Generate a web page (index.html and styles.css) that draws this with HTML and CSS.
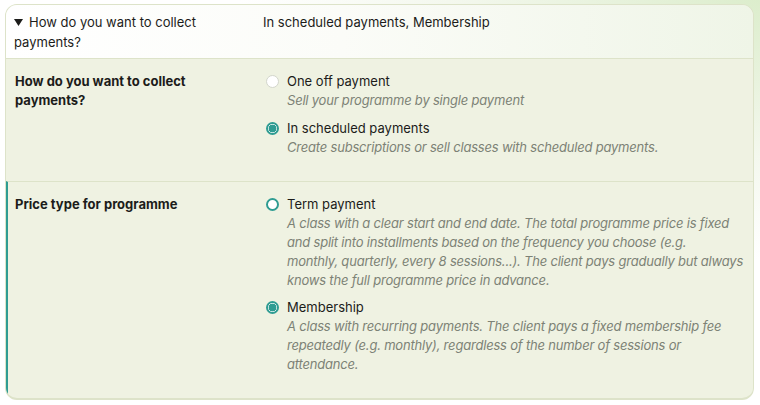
FILE: index.html
```html
<!DOCTYPE html>
<html lang="en">
<head>
  <meta charset="UTF-8">
  <title>Programme pricing</title>
  <link rel="stylesheet" href="styles.css">
</head>
<body>
  <div class="card">
    <div class="summary">
      <div class="summary-label"><svg class="caret" width="9" height="7" viewBox="0 0 9 7"><path d="M0 0H9L4.5 7Z" fill="#1c1c1a"/></svg>How do you want to collect payments?</div>
      <div class="summary-value">In scheduled payments, Membership</div>
    </div>

    <div class="section">
      <div class="label">How do you want to collect payments?</div>
      <div class="options">
        <div class="option">
          <span class="radio"></span>
          <div>
            <div class="option-title">One off payment</div>
            <div class="option-desc">Sell your programme by single payment</div>
          </div>
        </div>
        <div class="option">
          <span class="radio checked"></span>
          <div>
            <div class="option-title">In scheduled payments</div>
            <div class="option-desc">Create subscriptions or sell classes with scheduled payments.</div>
          </div>
        </div>
      </div>
    </div>

    <div class="section active">
      <div class="label">Price type for programme</div>
      <div class="options">
        <div class="option">
          <span class="radio focus"></span>
          <div>
            <div class="option-title">Term payment</div>
            <div class="option-desc">A class with a clear start and end date. The total programme price is fixed and split into installments based on the frequency you choose (e.g.<br>monthly, quarterly, every 8 sessions...). The client pays gradually but always knows the full programme price in advance.</div>
          </div>
        </div>
        <div class="option">
          <span class="radio checked"></span>
          <div>
            <div class="option-title">Membership</div>
            <div class="option-desc">A class with recurring payments. The client pays a fixed membership fee repeatedly (e.g. monthly), regardless of the number of sessions or attendance.</div>
          </div>
        </div>
      </div>
    </div>
  </div>
</body>
</html>
```

FILE: styles.css
```css
body {
  margin: 0;
  padding: 4px 6px 0 5px;
  font-family: "Inter", "Noto Sans", sans-serif;
  font-size: 13px;
  color: #1c1c1a;
  background: radial-gradient(ellipse 520px 260px at 100% 0%, #dcedcc 0%, #f4f8ee 60%, #ffffff 100%);
  height: 405px;
  box-sizing: border-box;
}

.card {
  border: 1px solid #dde3c9;
  border-bottom-width: 2px;
  border-radius: 12px;
  overflow: hidden;
  background: #eff2e2;
}

.summary {
  display: grid;
  grid-template-columns: 248px 1fr;
  padding: 7px 14px 6px 8px;
  line-height: 20px;
  background: linear-gradient(90deg, #ffffff 0%, #fbfcf8 45%, #eff5e7 100%);
  border-bottom: 1px solid #dde3c9;
}

.summary-label {
  padding-right: 40px;
}

.caret {
  margin: 0 6px 1px 0;
}

.summary-value {
  padding-left: 1px;
}

.section {
  display: grid;
  grid-template-columns: 248px 1fr;
  padding: 13px 8px 24px 9px;
  line-height: 19px;
  border-top: 1px solid #dde3c9;
}

.summary + .section {
  border-top: none;
}

.section.active {
  border-left: 2px solid #2f9c92;
  padding-left: 7px;
}

.label {
  font-weight: 700;
  padding-right: 60px;
}

.options {
  display: flex;
  flex-direction: column;
  gap: 8.5px;
}

.option {
  display: flex;
  gap: 8px;
}

.radio {
  flex: none;
  width: 13px;
  height: 13px;
  margin: 3px 0 0 3px;
  border-radius: 50%;
  background: #fff;
  border: 1px solid #d3d6cc;
  box-sizing: border-box;
}

.radio.focus {
  border: 2px solid #2f9c92;
}

.radio.checked {
  border: 2px solid #2f9c92;
  background: radial-gradient(circle, #2f9c92 0 3.6px, #fff 4.2px);
}

.option-desc {
  color: #7d8276;
  font-style: italic;
  letter-spacing: -0.2px;
}
```
